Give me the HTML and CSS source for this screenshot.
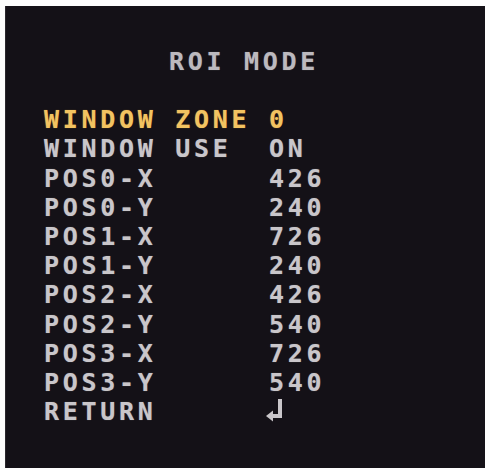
FILE: index.html
```html
<!DOCTYPE html>
<html lang="en">
<head>
    <meta charset="UTF-8">
    <title>ROI Mode</title>
    <link rel="stylesheet" href="styles.css">
</head>
<body>

    <div class="screen">
        <div class="title">ROI MODE</div>

        <div class="menu">
            <div class="row active"><span>WINDOW ZONE</span><span>0</span></div>
            <div class="row"><span>WINDOW USE</span><span>ON</span></div>
            <div class="row"><span>POS0-X</span><span>426</span></div>
            <div class="row"><span>POS0-Y</span><span>240</span></div>
            <div class="row"><span>POS1-X</span><span>726</span></div>
            <div class="row"><span>POS1-Y</span><span>240</span></div>
            <div class="row"><span>POS2-X</span><span>426</span></div>
            <div class="row"><span>POS2-Y</span><span>540</span></div>
            <div class="row"><span>POS3-X</span><span>726</span></div>
            <div class="row"><span>POS3-Y</span><span>540</span></div>
            <div class="row">
                <span>RETURN</span>
                <!-- flecha de retorno -->
                <svg class="enter" width="18" height="24" viewBox="0 0 18 24">
                    <rect x="12" y="1" width="4" height="19" />
                    <rect x="5" y="16" width="11" height="4" />
                    <polygon points="0,18 7,12.5 7,23.5" />
                </svg>
            </div>
        </div>
    </div>

</body>
</html>
```

FILE: styles.css
```css
* {
    margin: 0;
    padding: 0;
    box-sizing: border-box;
}
body {
    background: #fdfdfd;
    font-family: "DejaVu Sans Mono", monospace;
    font-weight: bold;
    font-size: 25px;
    line-height: 29.2px;
    letter-spacing: 3.7px;
}
.screen {
    width: 480px;
    height: 462px;
    margin: 6px 0 0 5px;
    background: #141117;
    border-left: 1px solid #2a272c;
    padding: 41px 0 0 38px;
    color: #c9c6ca;
    text-shadow: 0 0 1px rgba(200, 198, 202, 0.5);
}
.title {
    width: 400px;
    text-align: center;
    color: #bcb9be;
    margin-bottom: 29px;
}
.menu {
    display: flex;
    flex-direction: column;
}
.row {
    display: grid;
    grid-template-columns: 225px auto;
    height: 29.2px;
}
.active {
    color: #f2c361;
    text-shadow: 0 0 1px rgba(240, 170, 60, 0.6);
}
.enter {
    display: block;
    margin: 1px 0 0 -3px;
    fill: #c9c6ca;
}
```
